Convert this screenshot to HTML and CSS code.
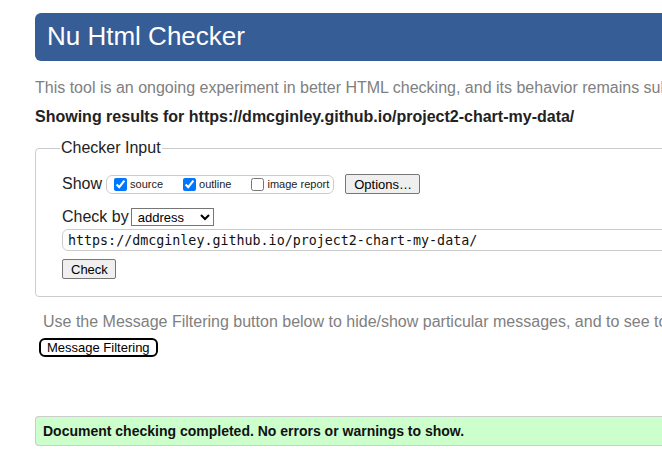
FILE: index.html
```html
<!DOCTYPE html>
<html>
<head>
<meta charset="utf-8">
<title>Nu Html Checker</title>
<link rel="stylesheet" href="styles.css">
</head>
<body>
<div class="page">
  <h1 class="banner">Nu Html Checker</h1>
  <p class="intro">This tool is an ongoing experiment in better HTML checking, and its behavior remains subject to change</p>
  <p class="results">Showing results for https://dmcginley.github.io/project2-chart-my-data/</p>
  <form class="checker">
    <fieldset class="fs">
      <legend class="legend">Checker Input</legend>
      <div class="row show-row">
        <span class="lbl">Show</span>
        <span class="opts">
          <label class="opt"><input type="checkbox" checked>source</label>
          <label class="opt"><input type="checkbox" checked>outline</label>
          <label class="opt"><input type="checkbox">image report</label>
        </span>
        <button type="button" class="btn">Options…</button>
      </div>
      <div class="row by-row">
        <span class="lbl">Check by</span>
        <select class="sel"><option>address</option><option>file upload</option><option>text input</option></select>
      </div>
      <div class="urlwrap"><input class="url" type="text" value="https://dmcginley.github.io/project2-chart-my-data/"></div>
      <div class="row"><button type="button" class="btn check">Check</button></div>
    </fieldset>
  </form>
  <p class="filter-note">Use the Message Filtering button below to hide/show particular messages, and to see total counts of errors and warnings.</p>
  <button type="button" class="mf">Message Filtering</button>
  <div class="success">Document checking completed. No errors or warnings to show.</div>
</div>
</body>
</html>
```
FILE: styles.css
```css
html, body {
  margin: 0;
  padding: 0;
  overflow: hidden;
  background: #fff;
}
body {
  font-family: "Liberation Sans", Arial, sans-serif;
  color: #222;
}
.page {
  width: 760px;
  padding: 13px 0 0 35px;
}
.banner {
  margin: 0;
  height: 48px;
  line-height: 46px;
  background: #365d95;
  color: #fff;
  font-weight: normal;
  font-size: 26px;
  padding-left: 12px;
  border-radius: 6px 0 0 6px;
}
.intro {
  margin: 17px 0 0;
  font-size: 16px;
  line-height: 20px;
  color: #808080;
  white-space: nowrap;
}
.results {
  margin: 9px 0 0;
  font-size: 16px;
  line-height: 20px;
  font-weight: bold;
  white-space: nowrap;
}
.checker {
  margin: 12px 0 0;
}
.fs {
  margin: 0;
  border: 1px solid #ccc;
  border-radius: 4px;
  padding: 3px 0 17px 26px;
  min-width: 0;
}
.legend {
  font-size: 16px;
  padding: 0 1px;
  margin-left: -2px;
  color: #222;
}
.row {
  display: flex;
  align-items: center;
}
.show-row {
  margin-top: 13px;
  height: 22px;
}
.lbl {
  font-size: 16px;
  color: #222;
  margin-right: 4px;
}
.opts {
  display: inline-flex;
  align-items: center;
  border: 1px solid #ccc;
  border-radius: 6px;
  height: 17px;
  padding: 0 4px 0 5px;
  margin-right: 11px;
}
.opt {
  display: inline-flex;
  align-items: center;
  font-size: 11px;
  margin-right: 18px;
}
.opt:last-child {
  margin-right: 0;
}
.opt input {
  margin: 0 3px 0 2px;
  width: 13px;
  height: 13px;
}
.btn {
  font-family: "Liberation Sans", Arial, sans-serif;
  font-size: 13px;
  height: 20px;
  padding: 0 7px 0 8px;
  border: 1px solid #767676;
  border-radius: 2px;
  background: #efefef;
  color: #000;
}
.by-row {
  margin-top: 13px;
}
.lbl + .sel {
  margin-left: -2px;
}
.sel {
  font-family: "Liberation Sans", Arial, sans-serif;
  font-size: 13px;
  width: 83px;
  height: 18px;
  padding: 0 0 0 2px;
  border: 1px solid #767676;
  border-radius: 0;
  background: #fff;
  color: #000;
}
.urlwrap {
  margin-top: 3px;
}
.url {
  box-sizing: border-box;
  width: 700px;
  height: 22px;
  border: 1px solid #ccc;
  border-radius: 6px;
  padding: 0 5px;
  font-family: "DejaVu Sans Mono", monospace;
  font-size: 13.33px;
  color: #111;
  outline: none;
}
.check {
  margin-top: 8px;
}
.filter-note {
  margin: 15px 0 0 8px;
  font-size: 16px;
  line-height: 20px;
  color: #808080;
  white-space: nowrap;
}
.mf {
  display: block;
  margin: 6px 0 0 4px;
  font-family: "Liberation Sans", Arial, sans-serif;
  font-size: 13px;
  height: 19px;
  padding: 0 6px;
  border: 2px solid #000;
  border-radius: 6px;
  background: #fff;
  color: #000;
}
.success {
  margin-top: 59px;
  height: 28px;
  line-height: 28px;
  background: #ccffcc;
  border: 1px solid #ccc;
  border-right: 0;
  border-radius: 4px 0 0 4px;
  padding-left: 7px;
  font-size: 14px;
  font-weight: bold;
  color: #111;
  white-space: nowrap;
}
```
